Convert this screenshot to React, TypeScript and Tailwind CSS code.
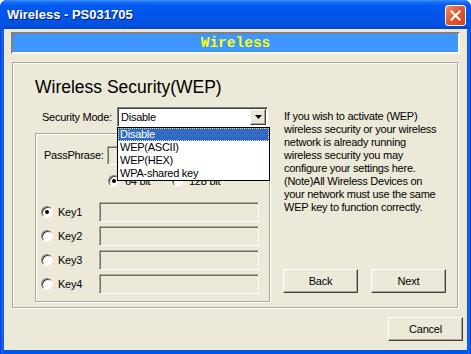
import React from 'react';

// Classic Win32 bits: sunken fields, raised buttons, radio dots
function Radio({ checked = false }: { checked?: boolean }) {
  return (
    <span className="relative w-[12px] h-[12px] shrink-0 rounded-full bg-white border border-t-[#808080] border-l-[#808080] border-b-[#F4F3EE] border-r-[#F4F3EE] shadow-[inset_1px_1px_0_#404040]">
      {checked && (
        <span className="absolute left-[3px] top-[3px] w-[4px] h-[4px] rounded-full bg-black" />
      )}
    </span>
  );
}

function Field({ className = '' }: { className?: string }) {
  return (
    <div
      className={`bg-[#ECE9D8] border border-t-[#ACA899] border-l-[#ACA899] border-b-white border-r-white shadow-[inset_1px_1px_0_#716F64] ${className}`}
    />
  );
}

function XpButton({ children, className = '' }: { children: React.ReactNode; className?: string }) {
  return (
    <button
      type="button"
      className={`w-[75px] h-[24px] bg-[#ECE9D8] text-[11px] tracking-[-0.2px] text-black border border-t-white border-l-white border-b-[#404040] border-r-[#404040] shadow-[inset_-1px_-1px_0_#ACA899] ${className}`}
    >
      {children}
    </button>
  );
}

const helpLines = [
  'If you wish to activate (WEP)',
  'wireless security or your wireless',
  'network is already running',
  'wireless security you may',
  'configure your settings here.',
  '(Note)All Wireless Devices on',
  'your network must use the same',
  'WEP key to function correctly.',
];

const modes = ['Disable', 'WEP(ASCII)', 'WEP(HEX)', 'WPA-shared key'];

export default function App() {
  return (
    <div className="w-[471px] h-[354px] flex flex-col rounded-t-[7px] overflow-hidden bg-[linear-gradient(to_right,#0831D9_0px,#166AEE_2px,#0055EA_4px,#0055EA_calc(100%-4px),#166AEE_calc(100%-2px),#0831D9_100%)] font-['Liberation_Sans',Arial,sans-serif] select-none">
      {/* Title bar */}
      <div className="h-[29px] shrink-0 flex items-center pl-[7px] pr-[5px] bg-[linear-gradient(to_bottom,#3D95FF_0px,#1A6EF5_2px,#0058EE_6px,#0055EA_16px,#0053E1_24px,#0046D0_29px)]">
        <span className="text-white font-bold text-[13px] leading-none [text-shadow:1px_1px_0_#0A1E6E]">
          Wireless - PS031705
        </span>
        <div className="ml-auto mt-[2px] w-[21px] h-[21px] rounded-[3px] border border-white bg-[linear-gradient(135deg,#F08C6A_0%,#E25A33_45%,#C7421E_100%)] flex items-center justify-center">
          <svg width="11" height="11" viewBox="0 0 11 11">
            <path d="M1.5 1.5 L9.5 9.5 M9.5 1.5 L1.5 9.5" stroke="#fff" strokeWidth="2.2" strokeLinecap="square" />
          </svg>
        </div>
      </div>

      {/* Client area */}
      <div className="flex-1 flex flex-col mx-[4px] mb-[4px] bg-[#ECE9D8] text-[11px] tracking-[-0.25px]">
        {/* Header banner */}
        <div className="mt-[3px] ml-[7px] w-[449px] h-[22px] bg-[#4096FF] border-2 border-t-[#808080] border-l-[#808080] border-b-white border-r-white flex items-center justify-center">
          <span className="font-['Liberation_Mono',monospace] font-bold text-[14.5px] tracking-normal leading-none text-[#FFFF00]">
            Wireless
          </span>
        </div>

        {/* Main group */}
        <div className="mt-[8px] ml-[8px] w-[446px] h-[246px] border border-[#ACA899] shadow-[inset_1px_1px_0_#fff,1px_1px_0_#fff] flex pl-[22px] pt-[14px]">
          {/* Left column */}
          <div className="w-[235px] flex flex-col">
            <h1 className="h-[20px] leading-[20px] text-[17.5px] tracking-normal text-black">Wireless Security(WEP)</h1>

            <div className="mt-[10px] h-[20px] flex items-center">
              <span className="pl-[7px] w-[82px] text-black">Security Mode:</span>
              <div className="relative w-[151px] h-[20px] bg-white border border-t-[#808080] border-l-[#808080] border-b-white border-r-white shadow-[inset_1px_1px_0_#404040] flex items-center">
                <span className="pl-[3px] text-black">Disable</span>
                <div className="ml-auto mr-[1px] w-[16px] h-[16px] bg-[#ECE9D8] border border-t-white border-l-white border-b-[#404040] border-r-[#404040] shadow-[inset_-1px_-1px_0_#ACA899] flex items-center justify-center">
                  <svg width="7" height="4" viewBox="0 0 7 4">
                    <path d="M0 0 H7 L3.5 4 Z" fill="#000" />
                  </svg>
                </div>

                {/* Open dropdown list */}
                <div className="absolute left-[-1px] top-[19px] z-10 w-[153px] bg-white border border-black">
                  {modes.map((m, i) => (
                    <div
                      key={m}
                      className={`h-[13px] leading-[13px] pl-[2px] ${
                        i === 0
                          ? 'bg-[#316AC5] text-white outline-1 outline-dotted outline-[#F5E48A] -outline-offset-1'
                          : 'text-black'
                      }`}
                    >
                      {m}
                    </div>
                  ))}
                </div>
              </div>
            </div>

            {/* Key group */}
            <div className="mt-[6px] w-[235px] h-[169px] border border-[#ACA899] shadow-[inset_1px_1px_0_#fff,1px_1px_0_#fff] flex flex-col pl-[8px] pt-[12px]">
              <div className="h-[19px] flex items-center">
                <span className="w-[63px] text-black">PassPhrase:</span>
                <Field className="w-[152px] h-[19px]" />
              </div>

              <div className="mt-[10px] h-[12px] flex items-center pl-[64px]">
                <div className="w-[64px] flex items-center">
                  <Radio checked />
                  <span className="ml-[5px] text-black">64 bit</span>
                </div>
                <Radio />
                <span className="ml-[5px] text-black">128 bit</span>
              </div>

              <div className="mt-[15px] -ml-[3px] flex flex-col gap-[4px]">
                {['Key1', 'Key2', 'Key3', 'Key4'].map((k, i) => (
                  <div key={k} className="h-[20px] flex items-center">
                    <Radio checked={i === 0} />
                    <span className="ml-[5px] w-[41px] text-black">{k}</span>
                    <Field className="w-[160px] h-[20px]" />
                  </div>
                ))}
              </div>
            </div>
          </div>

          {/* Right column */}
          <div className="ml-[13px] flex flex-col">
            <p className="mt-[33px] pl-[1px] leading-[13px] text-black whitespace-nowrap">
              {helpLines.map(line => (
                <span key={line} className="block">{line}</span>
              ))}
            </p>
            <div className="mt-[55px] flex gap-[13px]">
              <XpButton>Back</XpButton>
              <XpButton>Next</XpButton>
            </div>
          </div>
        </div>

        <div className="mt-[9px] self-end mr-[4px]">
          <XpButton>Cancel</XpButton>
        </div>
      </div>
    </div>
  );
}
